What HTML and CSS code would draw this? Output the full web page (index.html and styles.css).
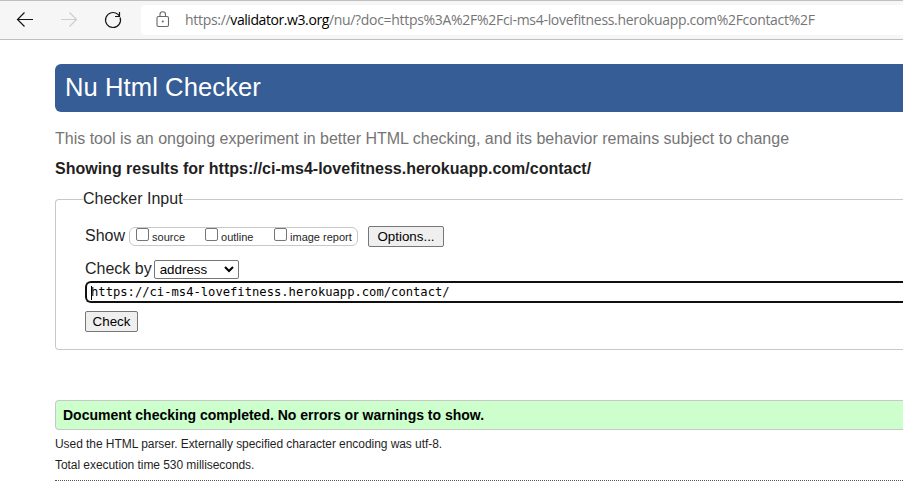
FILE: index.html
```
<!DOCTYPE html>
<html lang="en">
<head>
<meta charset="utf-8">
<title>Nu Html Checker</title>
<link rel="stylesheet" href="styles.css">
</head>
<body>
<header class="toolbar">
  <svg class="nav-icons" width="125" height="36" viewBox="0 0 125 36" fill="none" stroke-width="1.2">
    <path d="M33 16.500H17.500M24.500 9.500L17.500 16.500L24.500 23.500" stroke="#151515"/>
    <path d="M61 16.500H76.500M69.500 9.500L76.500 16.500L69.500 23.500" stroke="#cecece"/>
    <path d="M120.100 14.500A7.500 7.500 0 1 1 118 11.400L119.500 13M119.500 9V13.500H115" stroke="#151515"/>
  </svg>
  <div class="address">
    <svg width="14" height="17" viewBox="0 0 14 17" fill="none" stroke="#686868" stroke-width="1.100"><rect x="1" y="5.500" width="11.500" height="10" rx="1.500"/><path d="M4 5.500V3.500a2.750 2.750 0 0 1 5.500 0v2"/><circle cx="6.750" cy="10.500" r=".5" fill="#686868"/></svg>
    <span class="url">https://<b>validator.w3.org</b>/nu/?doc=https%3A%2F%2Fci-ms4-lovefitness.herokuapp.com%2Fcontact%2F</span>
  </div>
</header>
<main>
  <h1>Nu Html Checker</h1>
  <p class="intro">This tool is an ongoing experiment in better HTML checking, and its behavior remains subject to change</p>
  <h2>Showing results for https://ci-ms4-lovefitness.herokuapp.com/contact/</h2>
  <form class="checker">
    <div class="legend"><span>Checker Input</span></div>
    <div class="show-row">
      <span>Show</span>
      <div class="checks">
        <label><input type="checkbox"><span>source</span></label>
        <label><input type="checkbox"><span>outline</span></label>
        <label><input type="checkbox"><span>image report</span></label>
      </div>
      <button type="button" class="options">Options...</button>
    </div>
    <div class="by-row">
      <span>Check by</span>
      <div class="select"><span>address</span><svg width="10" height="7" viewBox="0 0 10 7" fill="none" stroke="#000" stroke-width="2"><path d="M1 1L5 5L9 1"/></svg></div>
    </div>
    <div class="document"><i class="caret"></i><span>https://ci-ms4-lovefitness.herokuapp.com/contact/</span></div>
    <button type="button" class="submit">Check</button>
  </form>
  <p class="success">Document checking completed. No errors or warnings to show.</p>
  <div class="details">
    <p>Used the HTML parser. Externally specified character encoding was utf-8.</p>
    <p>Total execution time 530 milliseconds.</p>
  </div>
</main>
</body>
</html>
```
FILE: styles.css
```
* { box-sizing: border-box; }
html, body { overflow: hidden; }
body { margin: 0; background: #fff; color: #1f1f1f; font: 16px/20px "Liberation Sans", Arial, sans-serif; white-space: nowrap; }
h1, h2, p { margin: 0; }
.toolbar { display: flex; height: 40px; padding-top: 4px; background: #f6f6f6; border-top: 1px solid #bfbfbf; border-bottom: 1px solid #bfbfbf; }
.nav-icons { flex: none; margin-top: -2px; }
.address { display: flex; align-items: center; width: 778px; height: 30px; margin-left: 16px; padding-left: 15px; background: #fff; border-radius: 4px 0 0 4px; }
.address svg { flex: none; margin-top: -1px; }
.url { margin-left: 15px; color: #757575; font: 14px/20px "Open Sans", sans-serif; letter-spacing: -.305px; }
.url b { color: #000; font-weight: 400; letter-spacing: -.42px; }
main { padding: 24px 0 0 55px; }
h1 { height: 48px; padding-left: 10px; background: #365d95; border-radius: 6px 0 0 6px; color: #fff; font-size: 25.6px; font-weight: 400; line-height: 46px; letter-spacing: .07px; }
.intro { margin-top: 17px; color: #757575; }
h2 { margin-top: 9px; font-size: 16px; line-height: 21px; }
.checker { height: 151px; margin-top: 20px; padding-left: 29px; border: 1px solid #c8c8c8; border-right: 0; border-radius: 4px 0 0 4px; }
.legend { height: 20px; margin: -11px 0 0 -2px; }
.legend span { display: inline-block; background: #fff; }
.show-row { display: flex; align-items: center; height: 22px; margin-top: 16px; }
.checks { display: flex; width: 229px; height: 19px; margin-left: 4px; padding-left: 6px; border: 1px solid #c8c8c8; border-radius: 6px; font-size: 11px; line-height: 19px; }
label { display: flex; width: 69px; }
label input { flex: none; width: 13px; height: 13px; margin: 0 3px 0 0; appearance: none; background: #fff; border: 1px solid #767676; border-radius: 2px; }
button { border: 1px solid #767676; border-radius: 2px; background: #efefef; color: #000; font: 13.333px/17px "Liberation Sans", Arial, sans-serif; padding: 0; }
.options { width: 76px; height: 21px; margin-left: 10px; }
.by-row { display: flex; height: 20px; margin-top: 12px; }
.select { display: flex; align-items: center; justify-content: space-between; width: 85px; height: 19px; margin: 1px 0 0 2px; padding: 0 4px 0 5px; border: 1px solid #767676; border-radius: 2px; color: #000; font-size: 13.333px; }
.document { display: flex; align-items: center; height: 22px; margin-top: 2px; padding: 1px 0 0 4px; border: 2px solid #101010; border-right: 0; border-radius: 6px 0 0 6px; color: #000; font: 12.17px/19px "DejaVu Sans Mono", monospace; }
.caret { width: 1px; height: 14px; margin-right: -1px; background: #000; }
.submit { display: block; width: 53px; height: 21px; margin-top: 8px; }
.success { height: 30px; margin-top: 50px; padding-left: 7px; background: #cfc; border: 1px solid #c8c8c8; border-right: 0; border-radius: 4px 0 0 4px; color: #000; font-size: 14px; font-weight: 700; line-height: 28px; }
.details { height: 51px; padding-top: 4px; border-bottom: 1px dotted #555; font-size: 12px; line-height: 21px; letter-spacing: -.055px; }
```
